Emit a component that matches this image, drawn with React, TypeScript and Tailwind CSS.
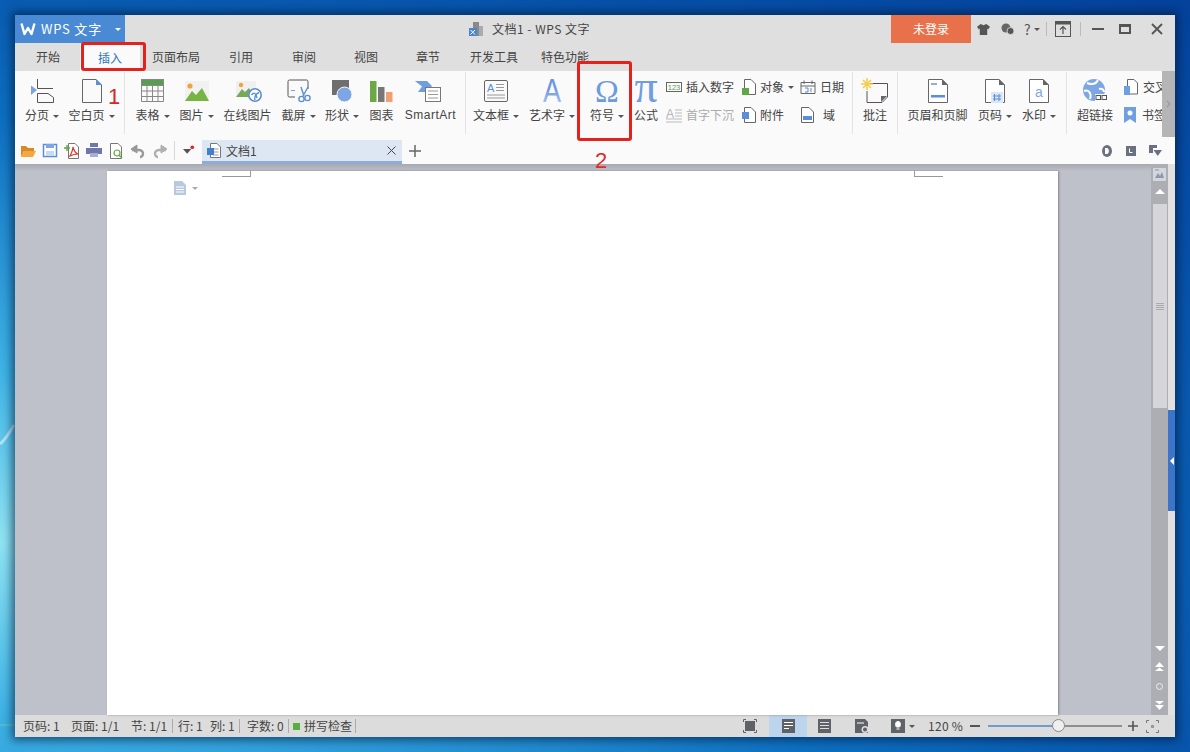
import type { ReactNode } from "react";
import clsx from "clsx";

const cjk = "font-['Noto_Sans_CJK_SC','Noto_Sans',sans-serif]";

function Caret({ className }: { className?: string }) {
  return (
    <span
      className={clsx(
        "inline-block align-middle w-0 h-0 border-x-[3px] border-x-transparent border-t-[3px] border-t-[#555]",
        className,
      )}
    />
  );
}

function Big({
  label,
  caret,
  className,
  children,
}: {
  label: string;
  caret?: boolean;
  className: string;
  children: ReactNode;
}) {
  return (
    <div className={clsx("shrink-0 flex flex-col items-center", className)}>
      <div className="h-[28px] flex items-center justify-center">{children}</div>
      <div className="mt-[2px] h-4 leading-4 text-xs whitespace-nowrap">
        {label}
        {caret && <Caret className="ml-[4px]" />}
      </div>
    </div>
  );
}

function Small({ label, caret, icon, gap }: { label: string; caret?: boolean; icon: ReactNode; gap: string }) {
  return (
    <div className="h-[28px] flex items-center whitespace-nowrap text-xs">
      {icon}
      <span className={gap}>{label}</span>
      {caret && <Caret className="ml-[4px]" />}
    </div>
  );
}

function Sep({ className }: { className?: string }) {
  return <div className={clsx("shrink-0 w-px h-[62px] -mt-[5px] bg-[#e3e3e3]", className)} />;
}

function I({ children, w = 32, h = 28 }: { children: ReactNode; w?: number; h?: number }) {
  return (
    <svg width={w} height={h} viewBox={`0 0 ${w} ${h}`} fill="none" className="block shrink-0 overflow-visible">
      {children}
    </svg>
  );
}

function Doc({ x = 6, w = 20 }: { x?: number; w?: number }) {
  const r = x + w;
  return (
    <>
      <path d={`M${x + 0.5} 2.5H${r - 6}L${r - 0.5} 8V25.5H${x + 0.5}Z`} stroke="#666" fill="#fff" strokeLinejoin="round" />
      <path d={`M${r - 6} 2L${r} 8H${r - 6}Z`} fill="#666" />
    </>
  );
}

function Mountains() {
  return (
    <>
      <rect x="4" y="4" width="24" height="20" fill="#f1f1f1" />
      <circle cx="9" cy="9" r="2.6" fill="#f2a33c" />
      <path d="M4 24L11 14L15 18L21 11L28 24Z" fill="#78b443" />
    </>
  );
}

function Double({ up }: { up?: boolean }) {
  return (
    <svg width="9" height="9" viewBox="0 0 9 9" fill="#fff" className={clsx("block", up && "rotate-180")}>
      <path d="M0 0H9L4.5 3.6Z" />
      <path d="M0 4H9L4.5 9Z" />
    </svg>
  );
}

export default function App() {
  return (
    <div className={clsx("relative w-[1190px] h-[752px] overflow-hidden p-[15px] bg-[radial-gradient(ellipse_at_0%_72%,#8fe3f2_0%,#3fb4e6_22%,#0d6fc0_55%,#0650a8_80%,#04429c_100%)]", cjk)}>
      {/* wallpaper streaks that show beside the window */}
      <svg width="15" height="320" viewBox="0 0 15 320" fill="none" className="absolute left-0 top-[420px]">
        <path d="M0 24C5 20 10 12 14 5" stroke="#e6f7fb" strokeOpacity="0.6" strokeWidth="3" />
        <path d="M0 305H15" stroke="#7fdc8a" strokeOpacity="0.7" />
      </svg>
      <div className="relative h-[722px] flex flex-col bg-[#dfdfdf] text-[#444] shadow-[0_0_9px_3px_rgba(0,25,60,0.65)]">
        {/* title bar */}
        <div className="h-[28px] shrink-0 flex items-center">
          <div className="w-[110px] h-full flex items-center bg-[#4a8ad4] text-white">
            <svg width="16" height="14" viewBox="0 0 16 14" fill="none" className="ml-[5px]">
              <path d="M1.5 1.5L4.5 12L8 6L11.5 12L14.5 1.5" stroke="#fff" strokeWidth="2.4" strokeLinejoin="round" />
            </svg>
            <span className="ml-[5px] text-[13px] tracking-[0.8px] whitespace-nowrap">WPS 文字</span>
            <Caret className="ml-[13px] border-t-white" />
          </div>
          <div className="ml-[344px] flex items-center">
            <I w={14} h={15}>
              <rect x="4" y="0" width="6" height="14" fill="#8a8a8a" />
              <rect x="10" y="4" width="4" height="10" fill="#aaa" />
              <rect x="0" y="6" width="8" height="8" fill="#4a86d0" />
              <path d="M1.5 8L6 12.5M6 8L1.5 12.5" stroke="#fff" />
            </I>
            <span className="ml-[9px] text-xs tracking-[0.5px] whitespace-nowrap">文档1 - WPS 文字</span>
          </div>
          <div className="flex-1" />
          <div className="w-[80px] h-full flex items-center justify-center bg-[#e8714b] text-white text-xs">未登录</div>
          <div className="w-[204px] h-full flex items-center">
            <svg width="13" height="13" viewBox="0 0 14 14" className="ml-[6px] shrink-0">
              <path d="M4 1L7 2.5L10 1L14 4L12 7L11 6V13H3V6L2 7L0 4Z" fill="#555" />
            </svg>
            <svg width="13" height="12" viewBox="0 0 13 12" className="ml-[11px] shrink-0">
              <circle cx="5" cy="5" r="4.5" fill="#666" />
              <circle cx="9.500" cy="8" r="3.500" fill="#555" stroke="#dfdfdf" strokeWidth="0.800" />
            </svg>
            <span className="ml-[10px] w-[8px] text-[14px] text-[#555]">?</span>
            <Caret className="ml-[2px]" />
            <div className="ml-[6px] w-px h-[14px] bg-[#bbb]" />
            <svg width="16" height="16" viewBox="0 0 16 16" fill="none" className="ml-[8px] shrink-0">
              <rect x="0.5" y="0.5" width="15" height="15" stroke="#555" />
              <rect x="0.5" y="0.5" width="15" height="3" fill="#555" />
              <path d="M8 13V6M5 8.5L8 5.5L11 8.5" stroke="#555" strokeWidth="1.2" />
            </svg>
            <div className="ml-[9px] w-px h-[14px] bg-[#bbb]" />
            <div className="ml-[11px] w-[12px] h-[2px] bg-[#555]" />
            <div className="ml-[15px] w-[12px] h-[10px] border-2 border-t-[3px] border-[#555]" />
            <svg width="12" height="12" viewBox="0 0 12 12" className="ml-[20px] shrink-0">
              <path d="M1 1L11 11M11 1L1 11" stroke="#555" strokeWidth="1.8" />
            </svg>
          </div>
        </div>

        {/* tabs */}
        <div className="h-[28px] shrink-0 flex items-center text-xs whitespace-nowrap">
          <span className="ml-[21px]">开始</span>
          <span className="ml-[20px] w-[60px] h-[27px] mt-px leading-[27px] text-center bg-[#fafafa] text-[#2f75b8]">插入</span>
          <span className="ml-[12px]">页面布局</span>
          <span className="ml-[29px]">引用</span>
          <span className="ml-[39px]">审阅</span>
          <span className="ml-[38px]">视图</span>
          <span className="ml-[38px]">章节</span>
          <span className="ml-[30px]">开发工具</span>
          <span className="ml-[23px]">特色功能</span>
        </div>

        {/* ribbon */}
        <div className="h-[66px] shrink-0 flex bg-[#fafafa]">
          <div className="flex-1 min-w-0 overflow-hidden flex items-start gap-[10px] pl-[10px] pt-[6px]">
            <Big label="分页" caret className="w-[34px]">
              <I>
                <path d="M5 8.5L11 13L5 18Z" fill="#7ba3dc" />
                <path d="M11.5 2V11.5H27M11.5 16.5H22L27.5 20.5V25.5H11.5Z" stroke="#555" />
              </I>
            </Big>
            <Big label="空白页" caret className="w-[45px]">
              <I>
                <path d="M6.5 2.5H20L25.5 8V25.5H6.5Z" stroke="#666" strokeLinejoin="round" />
                <path d="M20 2L26 8H20Z" fill="#5b8dd9" />
              </I>
            </Big>
            <Sep />
            <Big label="表格" caret className="w-[35px]">
              <I>
                <rect x="4" y="2" width="23" height="6" fill="#5a9b52" />
                <path d="M4.5 2.5H26.5V24.5H4.5ZM4.5 8.5H26.5M4.5 14H26.5M4.5 19.5H26.5M10 8V24.5M15.5 8V24.5M21 8V24.5" stroke="#888" />
              </I>
            </Big>
            <Big label="图片" caret className="w-[33px]">
              <I>
                <Mountains />
              </I>
            </Big>
            <Big label="在线图片" className="w-[49px]">
              <I>
                <rect x="4" y="4" width="20" height="16" fill="#f0f0f0" />
                <circle cx="9" cy="8" r="2.2" fill="#f2a33c" />
                <path d="M4 20L10 12L13 15L17 11L22 20Z" fill="#78a85a" />
                <circle cx="23" cy="18" r="6.2" fill="#fff" stroke="#5b8dd9" strokeWidth="1.6" />
                <path d="M19.5 18C22 15 24 16 25 21M27 15.5C24 17 22 19 23 23" stroke="#5b8dd9" strokeWidth="1.4" />
              </I>
            </Big>
            <Big label="截屏" caret className="w-[33px]">
              <I>
                <path d="M12 20H6.5A1.5 1.5 0 0 1 5 18.500V4.500A1.500 1.500 0 0 1 6.500 3H23.500A1.500 1.500 0 0 1 25 4.500V12" stroke="#555" />
                <rect x="8" y="13" width="4" height="1" fill="#7ba3dc" />
                <path d="M18 10L21 19M25 10L20 19" stroke="#5b8dd9" strokeWidth="1.4" />
                <circle cx="18.500" cy="22" r="2.600" stroke="#5b8dd9" strokeWidth="1.4" />
                <circle cx="24.500" cy="21" r="2.600" stroke="#5b8dd9" strokeWidth="1.4" />
              </I>
            </Big>
            <Big label="形状" caret className="w-[34px]">
              <I>
                <rect x="6" y="3" width="17" height="15" fill="#6e6e6e" />
                <circle cx="18.500" cy="17.500" r="7.500" fill="#7fa6e4" stroke="#fafafa" />
              </I>
            </Big>
            <Big label="图表" className="w-[25px]">
              <I>
                <rect x="4" y="4" width="6.500" height="21" fill="#6ca845" />
                <rect x="12" y="10" width="6.500" height="15" fill="#777" />
                <rect x="20" y="15" width="6.500" height="10" fill="#f0a070" />
              </I>
            </Big>
            <Big label="SmartArt" className="w-[53px] font-['Liberation_Sans',sans-serif] tracking-[0.5px]">
              <I>
                <path d="M0 4H12L17 9L12 15H3L7 9.500Z" fill="#6e9fe0" />
                <rect x="10.500" y="10.500" width="15" height="14" fill="#fff" stroke="#777" />
                <path d="M13 14H23M13 17.500H23M13 21H23" stroke="#999" />
              </I>
            </Big>
            <Sep className="-ml-[2px] -mr-[3px]" />
            <Big label="文本框" caret className="w-[46px]">
              <I>
                <rect x="4.500" y="3.500" width="23" height="21" rx="1.500" stroke="#666" />
                <text x="7" y="15" fontSize="11" fontFamily="Liberation Sans" fill="#5b8dd9">A</text>
                <path d="M16 7.500H24M16 10.500H24M16 13.500H24" stroke="#999" />
                <path d="M7 18H25M7 21H25" stroke="#999" />
              </I>
            </Big>
            <Big label="艺术字" caret className="w-[46px]">
              <I>
                <defs>
                  <linearGradient id="artFill" x1="0" y1="0" x2="0" y2="1">
                    <stop offset="0.450" stopColor="#6a97e0" />
                    <stop offset="1" stopColor="#b9cff0" />
                  </linearGradient>
                </defs>
                <text transform="translate(16 25) scale(0.820 1)" textAnchor="middle" fontSize="33" fontFamily="Liberation Sans" fill="url(#artFill)">A</text>
              </I>
            </Big>
            <Big label="符号" caret className="w-[34px] ml-[5px]">
              <I>
                <text x="16" y="25" textAnchor="middle" fontSize="32" fontFamily="Liberation Serif" fill="#6b9be0">Ω</text>
              </I>
            </Big>
            <Big label="公式" className="w-[24px]">
              <I>
                <text x="16" y="25" textAnchor="middle" fontSize="46" fontFamily="Liberation Serif" fill="#709ce2">π</text>
              </I>
            </Big>
            <div className="w-[68px] shrink-0 -ml-[2px] -mt-[4px]">
              <Small
                label="插入数字"
                gap="ml-[4px]"
                icon={
                  <I w={16} h={12}>
                    <rect x="0.500" y="1.500" width="15" height="9" stroke="#666" />
                    <text x="8" y="9" textAnchor="middle" fontSize="7.500" fontFamily="Liberation Sans" fill="#5a9b52">123</text>
                  </I>
                }
              />
              <div className="text-[#aaa]">
                <Small
                  label="首字下沉"
                  gap="ml-[4px]"
                  icon={
                    <I w={16} h={15}>
                      <text x="0" y="10" fontSize="12" fontFamily="Liberation Sans" fill="#b5b5b5">A</text>
                      <path d="M9 2H16M9 5H16M9 8H16M0 11H16M0 14H16" stroke="#bbb" />
                    </I>
                  }
                />
              </div>
            </div>
            <div className="w-[53px] shrink-0 -ml-[3px] -mt-[4px]">
              <Small
                label="对象"
                caret
                gap="ml-[3px]"
                icon={
                  <I w={16} h={16}>
                    <path d="M3.500 0.500H10L14.500 5V15.500H3.500Z" stroke="#666" fill="#fff" />
                    <rect x="1" y="9" width="7" height="7" fill="#5fa845" />
                  </I>
                }
              />
              <Small
                label="附件"
                gap="ml-[3px]"
                icon={
                  <I w={16} h={16}>
                    <path d="M3.500 0.500H10L14.500 5V15.500H3.500Z" stroke="#666" fill="#fff" />
                    <rect x="1" y="5" width="7" height="7" fill="#5b8dd9" />
                  </I>
                }
              />
            </div>
            <div className="w-[44px] shrink-0 -ml-[4px] -mt-[4px]">
              <Small
                label="日期"
                gap="ml-[4px]"
                icon={
                  <I w={16} h={14}>
                    <path d="M1 2.500H15V13.500H1ZM1 6H15M4 0.500V4M12 0.500V4" stroke="#666" />
                    <path d="M5 8H8V12H5M11 8V12" stroke="#5b8dd9" />
                  </I>
                }
              />
              <Small
                label="域"
                gap="ml-[7px]"
                icon={
                  <I w={16} h={16}>
                    <path d="M1.500 0.500H9L13.500 5V15.500H1.500Z" stroke="#666" fill="#fff" />
                    <rect x="3" y="9" width="9" height="4" fill="#5b8dd9" />
                  </I>
                }
              />
            </div>
            <Sep className="-ml-[2px]" />
            <Big label="批注" className="w-[24px]">
              <I>
                <path d="M11 6.500H28.500V20L23 25.500H8V14" stroke="#555" />
                <path d="M22 25L28 19H22Z" fill="#666" />
                <path d="M8 1V13M2 7H14M4 3L12 11M12 3L4 11" stroke="#f4ce4e" strokeWidth="1.600" />
              </I>
            </Big>
            <Sep className="-mr-[1px]" />
            <Big label="页眉和页脚" className="w-[61px]">
              <I>
                <Doc />
                <rect x="9" y="6" width="6" height="2" fill="#8fb0dc" />
                <rect x="9" y="18" width="14" height="2.500" fill="#5b8dd9" />
              </I>
            </Big>
            <Big label="页码" caret className="w-[34px]">
              <I>
                <Doc />
                <rect x="12" y="15" width="12" height="11" fill="#dbe6f6" />
                <path d="M15.500 17V24M20 17V24M14 19H22M14 22H22" stroke="#5b8dd9" />
              </I>
            </Big>
            <Big label="水印" caret className="w-[34px]">
              <I>
                <Doc />
                <text x="16" y="20" textAnchor="middle" fontSize="14" fontFamily="Liberation Sans" fill="#7fa6e4">a</text>
              </I>
            </Big>
            <Sep />
            <Big label="超链接" className="w-[36px]">
              <I>
                <circle cx="15" cy="13" r="11" fill="#7fa6e4" />
                <path d="M8 6C13 8 17 7 19 3M5 14C9 12 13 16 11 22M20 12C23 11 25 13 25 15" stroke="#fff" strokeWidth="2" />
                <rect x="16" y="17" width="12" height="7" fill="#fafafa" />
                <rect x="17" y="18.500" width="4.500" height="4" stroke="#555" />
                <rect x="23" y="18.500" width="4.500" height="4" stroke="#555" />
              </I>
            </Big>
            <div className="shrink-0 -mt-[4px]">
              <Small
                label="交叉引用"
                gap="ml-[4px]"
                icon={
                  <I w={16} h={17}>
                    <path d="M4.500 0.500H11L14.500 4V15H4.500Z" stroke="#666" fill="#fff" />
                    <path d="M1 7H7V16H1Z" fill="#6e9fe0" />
                  </I>
                }
              />
              <Small
                label="书签"
                gap="ml-[5px]"
                icon={
                  <I w={14} h={16}>
                    <path d="M1 0H13V16L7 12L1 16Z" fill="#6e9fe0" />
                    <circle cx="7" cy="6" r="2.500" fill="#fff" />
                  </I>
                }
              />
            </div>
          </div>
          <div className="w-[13px] shrink-0 flex items-center justify-center bg-[#b5b5b5]">
            <svg width="5" height="8" viewBox="0 0 5 8" fill="none">
              <path d="M1 1L4 4L1 7" stroke="#8a8a8a" />
            </svg>
          </div>
        </div>

        {/* quick access + document tab */}
        <div className="h-[27px] shrink-0 flex items-stretch bg-[#fafafa]">
          <div className="flex items-center gap-[6px] pl-[5px]">
            <I w={16} h={14}>
              <path d="M1 2H6L8 4H14V7H4L1 13Z" fill="#d98a28" />
              <path d="M4 7H16L13 13H1Z" fill="#f4a93e" />
            </I>
            <I w={16} h={15}>
              <path d="M1.500 1.500H14.500V13.500H1.500Z" stroke="#5b8dd9" strokeWidth="1.500" fill="#fff" />
              <rect x="4" y="1" width="8" height="4" fill="#7fa6e4" />
              <rect x="4" y="8" width="8" height="5" fill="#c9d9f2" />
            </I>
            <I w={16} h={16}>
              <path d="M4.500 0.500H11L14.500 4V15.500H4.500Z" stroke="#777" fill="#fff" />
              <path d="M6 13C8 9 9 6 9 4C10 8 11 10 14 11C11 11 8 12 6 13Z" stroke="#d9362c" strokeWidth="1.200" />
              <path d="M0 5H6M3 2V8" stroke="#5fa845" strokeWidth="1.400" />
            </I>
            <I w={16} h={15}>
              <rect x="4" y="0" width="8" height="4" fill="#6f76aa" />
              <rect x="0" y="5" width="16" height="6" fill="#6f76aa" />
              <rect x="4" y="10" width="8" height="4" fill="#a9aed0" />
            </I>
            <I w={16} h={16}>
              <path d="M2.500 0.500H10L13.500 4V15.500H2.500Z" stroke="#777" fill="#fff" />
              <circle cx="9" cy="10" r="3" stroke="#5fa845" strokeWidth="1.200" />
              <path d="M11 12L14 15" stroke="#5fa845" strokeWidth="1.400" />
            </I>
            <I w={16} h={14}>
              <path d="M2 6H9C12 6 13 8 13 10C13 12 11 13 10 13" stroke="#999" strokeWidth="2.400" />
              <path d="M7 1V9L1 5Z" fill="#999" stroke="#999" />
            </I>
            <I w={16} h={14}>
              <path d="M14 6H7C4 6 3 8 3 10C3 12 5 13 6 13" stroke="#b0b0b0" strokeWidth="2.400" />
              <path d="M9 1V9L15 5Z" fill="#b0b0b0" stroke="#b0b0b0" />
            </I>
          </div>
          <div className="ml-[6px] my-[4px] w-px bg-[#d8d8d8]" />
          <div className="ml-[8px] w-[12px] flex items-center">
            <svg width="13" height="11" viewBox="0 0 13 11">
              <path d="M0 4H9L4.500 9Z" fill="#555" />
              <circle cx="10" cy="2" r="2" fill="#d9262c" />
            </svg>
          </div>
          <div className="ml-[7px] mt-[3px] w-[200px] flex items-center border-b-[3px] border-[#8dadd6] bg-[#dde7f3]">
            <svg width="15" height="15" viewBox="0 0 15 15" fill="none" className="ml-[5px]">
              <path d="M3.500 0.500H10L13.500 4V14.500H3.500Z" stroke="#777" fill="#fff" />
              <path d="M6 6H11.500M6 9H11.500M6 12H11.500" stroke="#999" />
              <rect x="0" y="5" width="7" height="7" fill="#3f7fcc" />
            </svg>
            <span className="ml-[4px] text-xs">文档1</span>
            <svg width="9" height="9" viewBox="0 0 9 9" className="ml-auto mr-[6px]">
              <path d="M0.500 0.500L8.500 8.500M8.500 0.500L0.500 8.500" stroke="#444" />
            </svg>
          </div>
          <div className="ml-[7px] flex items-center">
            <svg width="12" height="12" viewBox="0 0 12 12">
              <path d="M6 0V12M0 6H12" stroke="#666" strokeWidth="1.500" />
            </svg>
          </div>
          <div className="flex-1" />
          <div className="flex items-center pr-[13px]">
            <svg width="10" height="12" viewBox="0 0 10 12">
              <ellipse cx="5" cy="6" rx="5" ry="6" fill="#6b7080" />
              <path d="M3 3V9H5C7.500 9 7.500 3 5 3Z" fill="#fafafa" />
            </svg>
            <svg width="10" height="10" viewBox="0 0 10 10" className="ml-[14px]">
              <rect width="10" height="10" fill="#6b7080" />
              <path d="M3.500 2.500V6.500H6.500" stroke="#fff" fill="none" />
            </svg>
            <svg width="13" height="11" viewBox="0 0 13 11" className="ml-[13px]">
              <path d="M0 0H8V3H4V8H0Z" fill="#6b7080" />
              <path d="M4.500 5H13L8.750 11Z" fill="#6b7080" />
            </svg>
          </div>
        </div>

        {/* document area */}
        <div className="flex-1 min-h-0 flex">
          <div className="flex-1 min-w-0 pt-[7px] pl-[92px] bg-[#bfc1ca] bg-[linear-gradient(#a7a9b1,#bfc1ca_7px)]">
            <div className="relative w-[951px] h-full bg-white shadow-[1px_0_2px_rgba(90,90,100,0.6)]">
              <div className="absolute left-[115px] top-0 w-[29px] h-[6px] border-b border-r border-[#999]" />
              <div className="absolute left-[807px] top-0 w-[29px] h-[6px] border-b border-l border-[#999]" />
              <div className="absolute left-[66px] top-[10px] flex items-center gap-[5px]">
                <svg width="14" height="14" viewBox="0 0 14 14">
                  <path d="M1 0H9L13 4V14H1Z" fill="#b8c8de" />
                  <path d="M3 6H11M3 8.500H11M3 11H11" stroke="#fff" />
                </svg>
                <Caret className="border-t-[#aaa]" />
              </div>
            </div>
          </div>

          {/* scrollbar */}
          <div className="w-[17px] shrink-0 flex flex-col items-center bg-[#adadb4]">
            <svg width="13" height="13" viewBox="0 0 13 13" className="mt-[4px] shrink-0">
              <rect width="13" height="13" fill="#d3d6de" />
              <path d="M2 10L5 5L7 8L9 4L11 10Z" fill="#9296a6" />
              <path d="M2 2H6" stroke="#9296a6" />
            </svg>
            <div className="h-[20px] flex items-center">
              <div className="w-0 h-0 border-x-[5px] border-x-transparent border-b-[5px] border-b-white" />
            </div>
            <div className="mt-[3px] w-[14px] h-[204px] flex flex-col items-center justify-center gap-[1px] bg-[#d6d6da]">
              <div className="w-[8px] h-px bg-[#aaa]" />
              <div className="w-[8px] h-px bg-[#aaa]" />
              <div className="w-[8px] h-px bg-[#aaa]" />
              <div className="w-[8px] h-px bg-[#aaa]" />
            </div>
            <div className="flex-1" />
            <div className="h-[16px] flex items-center">
              <div className="w-0 h-0 border-x-[5px] border-x-transparent border-t-[5px] border-t-white" />
            </div>
            <div className="h-[20px] flex items-center">
              <Double up />
            </div>
            <div className="h-[20px] flex items-center">
              <div className="w-[7px] h-[7px] rounded-full border border-[#eee]" />
            </div>
            <div className="h-[19px] flex items-center">
              <Double />
            </div>
          </div>

          {/* side strip with the task pane tab */}
          <div className="w-[7px] shrink-0 bg-[#e3e1df]">
            <div className="mt-[246px] h-[101px] flex items-center justify-center bg-[#3b74c8]">
              <div className="w-0 h-0 border-y-[4px] border-y-transparent border-r-[4px] border-r-white" />
            </div>
          </div>
        </div>

        {/* status bar */}
        <div className="h-[22px] shrink-0 flex items-center pl-[8px] pr-[16px] bg-[#dcdcdc] text-xs whitespace-nowrap">
          <span className="w-[48px]">页码: 1</span>
          <span className="w-[60px]">页面: 1/1</span>
          <span className="w-[41px]">节: 1/1</span>
          <div className="w-px h-[14px] bg-[#aaa]" />
          <span className="ml-[5px] w-[32px]">行: 1</span>
          <span className="w-[29px]">列: 1</span>
          <div className="w-px h-[14px] bg-[#aaa]" />
          <span className="ml-[7px] w-[41px]">字数: 0</span>
          <div className="w-px h-[14px] bg-[#aaa]" />
          <div className="ml-[4px] w-[7px] h-[7px] bg-[#56b03c]" />
          <span className="ml-[4px] w-[48px]">拼写检查</span>
          <div className="ml-[3px] w-px h-[14px] bg-[#aaa]" />
          <div className="flex-1" />
          <svg width="14" height="14" viewBox="0 0 14 14" fill="none">
            <rect x="2" y="2" width="10" height="10" fill="#5f6268" />
            <path d="M0.500 3V0.500H3M11 0.500H13.500V3M13.500 11V13.500H11M3 13.500H0.500V11" stroke="#5f6268" />
          </svg>
          <div className="ml-[12px] w-[38px] h-full flex items-center justify-center bg-[#bcd4ec]">
            <svg width="13" height="14" viewBox="0 0 13 14">
              <rect width="13" height="14" fill="#5f6268" />
              <path d="M2 3.500H11M2 6.500H11M2 9.500H7" stroke="#fff" />
            </svg>
          </div>
          <svg width="13" height="14" viewBox="0 0 13 14" className="ml-[11px]">
            <rect width="13" height="14" fill="#5f6268" />
            <path d="M2 3.500H11M2 6.500H11M2 9.500H11" stroke="#ddd" />
          </svg>
          <svg width="13" height="14" viewBox="0 0 13 14" className="ml-[24px]">
            <path d="M0 0H10L13 3V14H0Z" fill="#5f6268" />
            <path d="M2 4H9" stroke="#fff" />
            <circle cx="10" cy="10.500" r="3.500" fill="#dcdcdc" />
            <circle cx="10" cy="10.500" r="2" fill="#5f6268" />
          </svg>
          <svg width="14" height="14" viewBox="0 0 14 14" className="ml-[23px]">
            <rect width="14" height="14" fill="#5f6268" />
            <path d="M7 2.500C4 2.500 4 6.500 5.500 8H8.500C10 6.500 10 2.500 7 2.500Z M5.500 10H8.500" stroke="#fff" fill="#fff" />
          </svg>
          <Caret className="ml-[4px]" />
          <span className="ml-[13px] w-[36px] tracking-[0.3px]">120 %</span>
          <div className="ml-[6px] w-[10px] h-[2px] bg-[#555]" />
          <div className="relative ml-[8px] w-[134px] flex items-center">
            <div className="w-[70px] h-[2px] bg-[#6f9bcf]" />
            <div className="flex-1 h-[2px] bg-[#8f8f8f]" />
            <div className="absolute left-[64px] -top-[6px] w-[13px] h-[13px] rounded-full border border-[#888] bg-[#efefef]" />
          </div>
          <svg width="10" height="10" viewBox="0 0 10 10" className="ml-[6px]">
            <path d="M5 0V10M0 5H10" stroke="#555" strokeWidth="1.600" />
          </svg>
          <svg width="13" height="13" viewBox="0 0 13 13" fill="none" className="ml-[8px]">
            <path d="M0.500 3V0.500H3M10 0.500H12.500V3M12.500 10V12.500H10M3 12.500H0.500V10" stroke="#777" />
            <rect x="5" y="5" width="3" height="3" fill="#999" />
          </svg>
        </div>

        {/* red annotations */}
        <div className="absolute left-[66px] top-[27px] w-[65px] h-[29px] rounded-[3px] border-[3px] border-[#e3211d]" />
        <div className="absolute left-[562px] top-[46px] w-[55px] h-[80px] rounded-[3px] border-[3px] border-[#e3211d]" />
        <span className="absolute left-[93px] top-[69px] text-[22px] leading-[26px] text-[#cf2a2a] font-['Liberation_Sans',sans-serif]">1</span>
        <span className="absolute left-[580px] top-[133px] text-[22px] leading-[26px] text-[#e02b2b] font-['Liberation_Sans',sans-serif]">2</span>
      </div>
    </div>
  );
}
